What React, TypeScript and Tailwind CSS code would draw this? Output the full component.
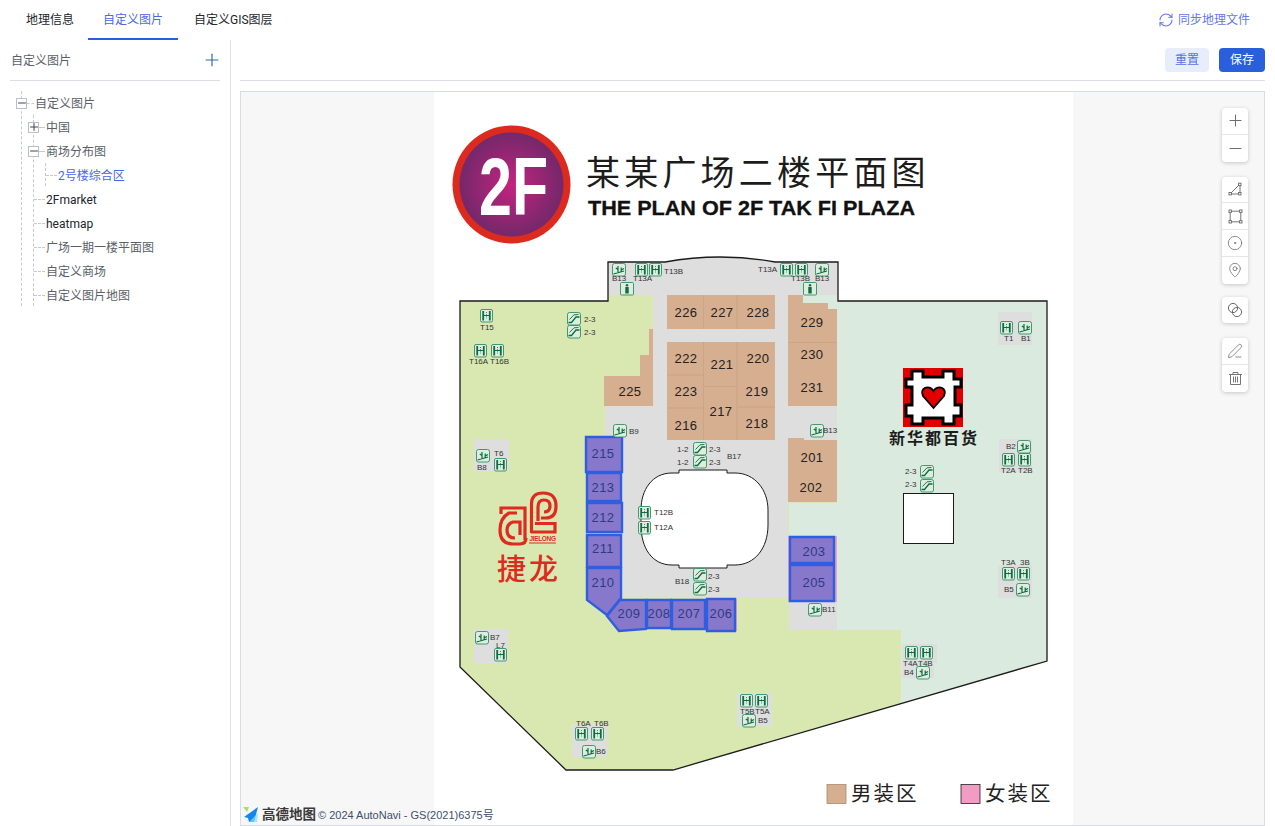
import React from "react";
import { CircleDot, MapPin, Minus, PenLine, Plus, RefreshCw } from "lucide-react";

const GREEN = "#2f8f66";
const DARK = "#0f6a47";
const ICON_BG = "#dfeddc";
const PEACH = "#d6ae90";
const SEAM = "#c5a084";
const LABEL_FONT = "'Liberation Sans', Arial, sans-serif";
const CJK_FONT = "'Noto Sans CJK SC', sans-serif";

const BLOCKS = [
  [998, 312, 34, 33],
  [474, 439, 35, 32],
  [474, 629, 34, 34],
  [572, 724, 35, 33],
  [737, 693, 35, 33],
  [902, 644, 35, 19],
  [902, 663, 32, 15],
  [999, 439, 33, 33],
  [998, 565, 34, 33],
];

const ELEVATORS = [
  [635, 263], [649, 263], [780, 263], [795, 263], [480, 309], [474, 344], [491, 344],
  [494, 458], [638, 506], [638, 521], [1000, 321], [1002, 453], [1018, 453], [1002, 567],
  [1017, 567], [905, 646], [920, 646], [740, 694], [755, 694], [575, 727], [591, 727], [494, 648],
];
const ESCALATORS = [
  [567, 312], [567, 325], [693, 442], [693, 455], [693, 568], [693, 582], [920, 465], [920, 479],
];
const STAIRS = [
  [612, 263], [815, 263], [476, 449], [613, 424], [810, 424], [808, 603], [1018, 321], [1017, 440],
  [1016, 583], [916, 666], [742, 714], [582, 745], [475, 631],
];
const TOILETS = [
  [620, 282], [803, 282],
];

const LABELS: [string, number, number][] = [
  ["T13B", 664, 274], ["B13", 612, 281], ["T13A", 633, 281], ["T13A", 758, 272], ["T13B", 791, 281], ["B13", 815, 281],
  ["T15", 480, 330], ["2-3", 584, 322], ["2-3", 584, 335], ["T16A", 469, 364], ["T16B", 490, 364],
  ["T6", 494, 456], ["B8", 477, 470], ["B9", 629, 434], ["B13", 823, 433], ["1-2", 677, 452], ["1-2", 677, 465],
  ["2-3", 709, 452], ["2-3", 709, 465], ["B17", 727, 459], ["T12B", 654, 515], ["T12A", 654, 530], ["B18", 675, 584],
  ["2-3", 708, 579], ["2-3", 708, 592], ["B11", 822, 612], ["T1", 1004, 341], ["B1", 1021, 341], ["B2", 1006, 449],
  ["T2A", 1001, 473], ["T2B", 1018, 473], ["2-3", 905, 474], ["2-3", 905, 487], ["T3A", 1001, 565], ["3B", 1020, 565],
  ["B5", 1004, 592], ["T4A", 903, 666], ["T4B", 918, 666], ["B4", 904, 675], ["T5B", 740, 714], ["T5A", 755, 714],
  ["B5", 758, 723], ["T6A", 576, 726], ["T6B", 594, 726], ["B6", 596, 754], ["B7", 490, 640], ["L7", 496, 648],
];

const SHOPS: [string, number, number][] = [
  ["226", 686, 317], ["227", 722, 317], ["228", 758, 317], ["229", 812, 327], ["222", 686, 363], ["221", 722, 369],
  ["220", 758, 363], ["223", 686, 396], ["219", 757, 396], ["217", 721, 416], ["216", 686, 430], ["218", 757, 428],
  ["225", 630, 396], ["230", 812, 359], ["231", 812, 392], ["201", 812, 462], ["202", 811, 492],
];
const FEMALE_SHOPS: [string, number, number][] = [
  ["215", 603, 458], ["213", 603, 492], ["212", 603, 522], ["211", 603, 553], ["210", 603, 587], ["209", 629, 618],
  ["208", 659, 618], ["207", 689, 618], ["206", 721, 618], ["203", 814, 556], ["205", 814, 587],
];
const FEMALE_AREAS = [
  "586,437 622,437 622,472 586,472",
  "587,473 621,473 621,501 587,501",
  "587,503 622,503 622,532 587,532",
  "587,535 621,535 621,567 587,567",
  "587,568 621,568 621,598 607,615 587,600",
  "620,600 646,600 646,629 619,631 607,616",
  "647,600 671,600 671,628 647,628",
  "672,600 705,600 705,629 672,629",
  "707,599 735,599 735,631 707,631",
  "790,537 834,537 834,563 790,563",
  "790,565 834,565 834,601 790,601",
];

function Elevator({ x, y }: { x: number; y: number }) {
  return (
    <g transform={`translate(${x} ${y})`}>
      <rect x="0.5" y="0.5" width="12" height="12.5" rx="1.5" fill={ICON_BG} stroke={GREEN} strokeWidth="0.9" />
      <path d="M3.2 2v9.5M9.8 2v9.5" stroke={DARK} strokeWidth="1.8" />
      <path d="M3 6.5h7" stroke={DARK} strokeWidth="1" />
      <path d="M6.5 3v7" stroke={DARK} strokeWidth="0.8" strokeDasharray="1 1.2" />
    </g>
  );
}

function Escalator({ x, y }: { x: number; y: number }) {
  return (
    <g transform={`translate(${x} ${y})`}>
      <rect x="0.5" y="0.5" width="13" height="12.5" rx="2" fill={ICON_BG} stroke={GREEN} strokeWidth="0.9" />
      <path d="M1.5 10.5L4.5 10.5L9 5L12.5 5" fill="none" stroke={DARK} strokeWidth="1.3" />
      <path d="M2.5 7.5L7 2.8L11.5 2.5" fill="none" stroke={DARK} strokeWidth="0.9" />
    </g>
  );
}

function Stair({ x, y }: { x: number; y: number }) {
  return (
    <g transform={`translate(${x} ${y})`}>
      <rect x="0.5" y="0.5" width="13" height="12.5" rx="2" fill={ICON_BG} stroke={GREEN} strokeWidth="0.9" />
      <path d="M1.5 11L12 8M6 9.7L6 3M9.2 8.8L9.2 4.5M9.2 7L12 5.5M6 6.5L3.8 5" fill="none" stroke={DARK} strokeWidth="1.2" />
    </g>
  );
}

function Toilet({ x, y }: { x: number; y: number }) {
  return (
    <g transform={`translate(${x} ${y})`}>
      <rect x="0.5" y="0.5" width="13" height="12.5" rx="1" fill={ICON_BG} stroke={GREEN} strokeWidth="0.9" />
      <circle cx="7" cy="3.2" r="1.2" fill={DARK} />
      <rect x="5.3" y="5" width="3.4" height="6.5" fill={DARK} />
    </g>
  );
}

function Legend({ color, label, x }: { color: string; label: string; x: number }) {
  return (
    <g>
      <rect x={x} y="784.5" width="19" height="19" fill={color} stroke={color === PEACH ? "#a98a70" : "#222"} strokeWidth="0.8" />
      <text x={x + 24} y="801" fontFamily={CJK_FONT} fontSize="20.5" letterSpacing="2" fill="#222">
        {label}
      </text>
    </g>
  );
}

function FloorPlan() {
  return (
    <svg viewBox="241 92 1023 733" className="h-full w-full block">
      <defs>
        <radialGradient id="badge">
          <stop offset="0%" stopColor="#c4237f" />
          <stop offset="100%" stopColor="#74286a" />
        </radialGradient>
      </defs>
      <rect x="434" y="92" width="639" height="734" fill="#ffffff" />

      {/* heading */}
      <circle cx="511.5" cy="184.5" r="59" fill="#dd2a1f" />
      <circle cx="511.5" cy="184.5" r="52" fill="url(#badge)" />
      <text x="479" y="215" fontFamily={LABEL_FONT} fontWeight="700" fontSize="82" fill="#fff" textLength="69" lengthAdjust="spacingAndGlyphs">
        2F
      </text>
      <text x="586" y="185" fontFamily={CJK_FONT} fontSize="34" letterSpacing="4.2" fill="#1c1c1c">
        某某广场二楼平面图
      </text>
      <text x="588" y="214.5" fontFamily={LABEL_FONT} fontWeight="700" fontSize="21" fill="#111" stroke="#111" strokeWidth="0.3" textLength="327" lengthAdjust="spacingAndGlyphs">
        THE PLAN OF 2F TAK FI PLAZA
      </text>

      {/* floor areas */}
      <path d="M460 301H608V262H665Q720 252 775 262H838V301H1047V661L673 770H566L460 667Z" fill="#d9e8b0" />
      <path d="M837 301H1047V661L901 703V630H789V537H837Z" fill="#dbeade" />
      <path d="M789 503H837V537H789Z" fill="#dbeade" />
      <path d="M608 262H665Q720 252 775 262H838V295H803L788 310V598H622V437H605V406H653V295H608Z" fill="#dedede" />
      <rect x="789" y="600" width="48" height="30" fill="#dedede" />
      <rect x="788" y="406" width="49" height="34" fill="#dedede" />
      <path d="M803 295H837V309H828V303H803Z" fill="#dbeade" />
      <path d="M837 295H838V301H837Z" fill="#dbeade" />
      <path d="M460 301H608V262H665Q720 252 775 262H838V301H1047V661L673 770H566L460 667Z" fill="none" stroke="#1b1b1b" strokeWidth="1.3" />

      {/* atrium and void */}
      <path
        d="M679 470H727V473H735C755 473 768 490 768 510V525C768 548 755 565 735 565H727V568H679V565H672C652 565 641 548 641 525V510C641 490 652 473 672 473H679Z"
        fill="#fff"
        stroke="#1b1b1b"
        strokeWidth="1"
      />
      <rect x="903.5" y="493.5" width="50" height="50" fill="#fff" stroke="#1b1b1b" strokeWidth="1" />

      {/* men's shops */}
      <g fill={PEACH}>
        <rect x="667" y="295" width="108" height="34" />
        <rect x="667" y="342" width="108" height="98" />
        <path d="M604 376H640V355H649V329H653V406H604Z" />
        <path d="M788 295H803V303H828V309H837V406H788Z" />
        <path d="M788 438H804V440H837V502H788Z" />
      </g>
      <path
        d="M703.5 295V329M737 295V329M703.5 342V440M737 342V440M667 375H703.5M667 408H703.5M703.5 386.5H737M737 407H775M788 342.5H837"
        stroke={SEAM}
        strokeWidth="0.7"
      />
      <g fontFamily={LABEL_FONT} fontSize="13" fill="#222" textAnchor="middle" letterSpacing="0.4">
        {SHOPS.map(([t, x, y]) => (
          <text key={t} x={x} y={y}>{t}</text>
        ))}
      </g>

      {/* women's shops */}
      <rect x="788" y="536" width="49" height="66" fill="#efa3c2" />
      <rect x="735" y="599" width="2" height="32" fill="#efa3c2" />
      {FEMALE_AREAS.map((p) => (
        <polygon key={p} points={p} fill="#8878cc" stroke="#2f5fe0" strokeWidth="2.4" />
      ))}
      <g fontFamily={LABEL_FONT} fontSize="13" fill="#2f3a85" textAnchor="middle" letterSpacing="0.4">
        {FEMALE_SHOPS.map(([t, x, y]) => (
          <text key={t} x={x} y={y}>{t}</text>
        ))}
      </g>

      {/* service blocks */}
      {BLOCKS.map(([x, y, w, h]) => (
        <rect key={`${x}-${y}`} x={x} y={y} width={w} height={h} fill="#dedede" />
      ))}
      {ELEVATORS.map(([x, y]) => <Elevator key={`${x}-${y}`} x={x} y={y} />)}
      {ESCALATORS.map(([x, y]) => <Escalator key={`${x}-${y}`} x={x} y={y} />)}
      {STAIRS.map(([x, y]) => <Stair key={`${x}-${y}`} x={x} y={y} />)}
      {TOILETS.map(([x, y]) => <Toilet key={`${x}-${y}`} x={x} y={y} />)}
      <g fontFamily={LABEL_FONT} fontSize="8" fill="#333">
        {LABELS.map(([t, x, y]) => (
          <text key={`${t}-${x}-${y}`} x={x} y={y}>{t}</text>
        ))}
      </g>

      {/* department store logo */}
      <rect x="903" y="368" width="60" height="59" fill="#e00000" />
      <polygon
        points="912,371 923,371 923,377 943,377 943,371 954,371 954,379 961,379 961,387 955,387 955,405 961,405 961,416 954,416 954,424 943,424 943,418 923,418 923,424 912,424 912,416 906,416 906,405 912,405 912,387 906,387 906,379 912,379"
        fill="#fff"
        stroke="#000"
        strokeWidth="3"
      />
      <path d="M933.5 408L923 396C919 388 929 384 933.5 391C938 384 948 388 944 396Z" fill="#e00000" stroke="#000" strokeWidth="1.8" />
      <text x="889" y="444" fontFamily={CJK_FONT} fontWeight="700" fontSize="16" letterSpacing="2" fill="#1c1c1c">
        新华都百货
      </text>

      {/* jielong logo */}
      <g fill="none" stroke="#de2a1f" strokeWidth="3.2">
        <path d="M531.5 533V504Q531.5 493 543 493Q556 493 556 506Q556 518 546 518H541" />
        <path d="M538 521V507Q538 500 544 500Q550 500 550 506Q550 512 544 512" />
        <path d="M535 523.5H555V532H531" />
        <path d="M525 540V508H501V514" />
        <path d="M517 513H509Q500 518 500 530Q500 544 513 544H520Q526 544 526 538" />
        <path d="M520 535V522H513Q507 524 507 530Q507 538 515 538" />
      </g>
      <text x="529.5" y="541" fontFamily={LABEL_FONT} fontWeight="700" fontSize="6.5" fill="#de2a1f" textLength="26.5">
        JIELONG
      </text>
      <path d="M529 543H556" stroke="#de2a1f" strokeWidth="1" />
      <text x="497" y="580" fontFamily={CJK_FONT} fontWeight="500" fontSize="29" letterSpacing="3" fill="#de2a1f">
        捷龙
      </text>

      <Legend color={PEACH} label="男装区" x={827} />
      <Legend color="#f09cc4" label="女装区" x={961} />

      {/* map attribution */}
      <path d="M243 807H249L247 812Z" fill="#a8e06a" />
      <path d="M244 817L258 807L254 822H249L248 818Z" fill="#1587ea" />
      <path d="M249 822H257L258 813Z" fill="#7fe0f5" opacity="0.7" />
      <text x="262" y="819" fontFamily={CJK_FONT} fontWeight="700" fontSize="13.5" fill="#3a3a3a">
        高德地图
      </text>
      <text x="318" y="819" fontFamily={`'Liberation Sans', ${CJK_FONT}`} fontSize="11" fill="#3d4f6b">
        © 2024 AutoNavi - GS(2021)6375号
      </text>
    </svg>
  );
}

function ToolGroup({ children }: { children: React.ReactNode }) {
  return (
    <div className="flex w-[26px] flex-col divide-y divide-[#e6e6e6] rounded-sm bg-white shadow-[0_1px_4px_rgba(0,0,0,0.2)]">
      {children}
    </div>
  );
}

function Tool({ children }: { children: React.ReactNode }) {
  return <div className="flex h-[26.75px] items-center justify-center text-[#666]">{children}</div>;
}

function MapTools() {
  return (
    <div className="absolute right-[16px] top-[16px] flex flex-col">
      <ToolGroup>
        <Tool><Plus className="size-[19px]" strokeWidth={1.2} /></Tool>
        <Tool><Minus className="size-[19px]" strokeWidth={1.2} /></Tool>
      </ToolGroup>
      <div className="mt-[15px]">
        <ToolGroup>
          <Tool>
            <svg width="15" height="15" viewBox="0 0 15 15" fill="none" stroke="currentColor" strokeWidth="0.9">
              <path d="M3 11L11 3M12 4V11M3.5 12H10.5" />
              <rect x="1" y="10.5" width="2.4" height="2.4" />
              <rect x="10.6" y="1.2" width="2.4" height="2.4" />
              <rect x="10.6" y="10.5" width="2.4" height="2.4" />
            </svg>
          </Tool>
          <Tool>
            <svg width="15" height="15" viewBox="0 0 15 15" fill="none" stroke="currentColor" strokeWidth="0.9">
              <path d="M3.5 2.2H11.5M3.5 12.8H11.5M2.2 3.5V11.5M12.8 3.5V11.5" />
              <rect x="1" y="1" width="2.4" height="2.4" />
              <rect x="11.6" y="1" width="2.4" height="2.4" />
              <rect x="1" y="11.6" width="2.4" height="2.4" />
              <rect x="11.6" y="11.6" width="2.4" height="2.4" />
            </svg>
          </Tool>
          <Tool><CircleDot className="size-[16px]" strokeWidth={1.1} /></Tool>
          <Tool><MapPin className="size-[16px]" strokeWidth={1.1} /></Tool>
        </ToolGroup>
      </div>
      <div className="mt-[13px]">
        <ToolGroup>
          <Tool>
            <svg width="16" height="16" viewBox="0 0 16 16" fill="none" stroke="currentColor" strokeWidth="1">
              <circle cx="6" cy="6" r="4.6" />
              <circle cx="10" cy="10" r="4.6" />
            </svg>
          </Tool>
        </ToolGroup>
      </div>
      <div className="mt-[15px]">
        <ToolGroup>
          <Tool><PenLine className="size-[16px]" strokeWidth={1.1} /></Tool>
          <Tool>
            <svg width="15" height="15" viewBox="0 0 15 15" fill="none" stroke="currentColor" strokeWidth="0.9">
              <path d="M1 3.5H14M5 3.5V1.5H10V3.5M2.5 3.5V13.5H12.5V3.5M5.5 5.5V11.5M7.5 5.5V11.5M9.5 5.5V11.5" />
            </svg>
          </Tool>
        </ToolGroup>
      </div>
    </div>
  );
}

function Expander({ open }: { open: boolean }) {
  return (
    <span className="relative z-10 flex size-[11px] shrink-0 items-center justify-center border border-[#b9bfcc] bg-white text-[#444]">
      {open ? (
        <Minus className="size-[12px] shrink-0" strokeWidth={2} />
      ) : (
        <Plus className="size-[12px] shrink-0" strokeWidth={2} />
      )}
    </span>
  );
}

function TreeRow({
  label,
  pad,
  dash,
  expander,
  active,
  dark,
}: {
  label: string;
  pad: string;
  dash: string;
  expander?: "open" | "closed";
  active?: boolean;
  dark?: boolean;
}) {
  return (
    <div className={`relative flex h-6 items-center ${pad}`}>
      {expander && <Expander open={expander === "open"} />}
      <span className={`mr-px shrink-0 border-t border-dashed border-[#c6c9cf] ${dash}`} />
      <span className={`pt-0.5 ${active ? "text-[#4a68ea]" : dark ? "text-[#22262e]" : "text-[#5a5f68]"}`}>{label}</span>
    </div>
  );
}

function Tree() {
  return (
    <div className="relative mt-[10px] text-xs">
      <span className="absolute left-[21px] top-0 h-[215px] border-l border-dashed border-[#c6c9cf]" />
      <span className="absolute left-[33px] top-[24px] h-[191px] border-l border-dashed border-[#c6c9cf]" />
      <span className="absolute left-[45px] top-[72px] h-[23px] border-l border-dashed border-[#c6c9cf]" />
      <TreeRow label="自定义图片" pad="pl-[16px]" dash="w-[7px]" expander="open" />
      <TreeRow label="中国" pad="pl-[28px]" dash="w-[6px]" expander="closed" />
      <TreeRow label="商场分布图" pad="pl-[28px]" dash="w-[6px]" expander="open" />
      <TreeRow label="2号楼综合区" pad="pl-[46px]" dash="w-[11px]" active />
      <TreeRow label="2Fmarket" pad="pl-[34px]" dash="w-[11px]" dark />
      <TreeRow label="heatmap" pad="pl-[34px]" dash="w-[11px]" dark />
      <TreeRow label="广场一期一楼平面图" pad="pl-[34px]" dash="w-[11px]" />
      <TreeRow label="自定义商场" pad="pl-[34px]" dash="w-[11px]" />
      <TreeRow label="自定义图片地图" pad="pl-[34px]" dash="w-[11px]" />
    </div>
  );
}

export default function App() {
  return (
    <div
      className="flex h-[826px] w-[1275px] flex-col overflow-hidden bg-white text-xs"
      style={{ fontFamily: "Roboto, 'Noto Sans CJK SC', sans-serif" }}
    >
      <div className="flex h-10 shrink-0 items-stretch justify-between pl-[10px] pr-[25px]">
        <div className="flex">
          <div className="flex w-[78px] items-center pl-4 text-[#22262e]">地理信息</div>
          <div className="flex w-[90px] items-center justify-center border-b-2 border-[#2a5fdc] pt-0.5 text-[#4a68ea]">自定义图片</div>
          <div className="flex items-center pl-4 text-[#22262e]">自定义GIS图层</div>
        </div>
        <div className="flex items-center gap-[4px] text-[#6478e6]">
          <RefreshCw className="size-[16px]" strokeWidth={1.6} />
          <span>同步地理文件</span>
        </div>
      </div>

      <div className="flex min-h-0 flex-1">
        <aside className="w-[231px] shrink-0 border-r border-[#dcdfe6] px-[10px]">
          <div className="flex h-[41px] items-center justify-between border-b border-[#dcdfe6] pl-px text-[#5a5f68]">
            <span className="pt-0.5">自定义图片</span>
            <Plus className="-mr-[2px] size-[20px] text-[#2a6ea0]" strokeWidth={1.4} />
          </div>
          <div className="-mx-[10px]">
            <Tree />
          </div>
        </aside>

        <main className="flex min-w-0 flex-1 flex-col pl-[9px] pr-[10px]">
          <div className="flex h-[41px] shrink-0 items-start justify-end gap-[10px] border-b border-[#dcdfe6] pt-2">
            <button type="button" className="h-6 w-11 rounded-sm bg-[#e8edfb] text-[#5575dd]">重置</button>
            <button type="button" className="h-6 w-[46px] rounded-sm bg-[#2a5fdc] text-white">保存</button>
          </div>
          <div className="relative mt-[10px] min-h-0 flex-1 border border-[#d8dce5] bg-[#f7f7f7]">
            <FloorPlan />
            <MapTools />
          </div>
        </main>
      </div>
    </div>
  );
}
